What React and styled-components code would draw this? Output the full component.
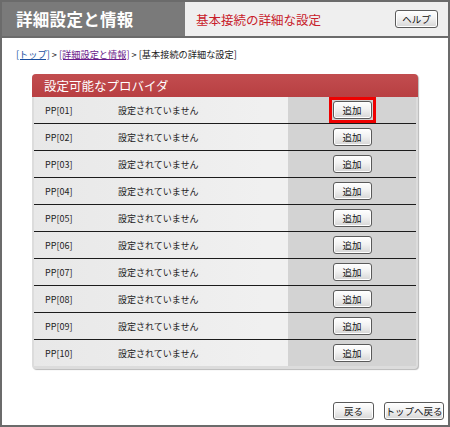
import React from 'react';
import styled, { createGlobalStyle } from 'styled-components';

const GlobalStyle = createGlobalStyle`
  html, body {
    margin: 0;
    padding: 0;
    background: #fff;
  }
  body {
    font-family: "Noto Sans CJK JP", "Noto Sans", sans-serif;
  }
`;

const providers = Array.from({ length: 10 }, (_, i) => `PP[${String(i + 1).padStart(2, '0')}]`);

const App = () => (
  <>
    <GlobalStyle />
    <Frame>
      <Header>
        <Title>詳細設定と情報</Title>
        <SubHeader>
          <SubTitle>基本接続の詳細な設定</SubTitle>
          <Button width={43}>ヘルプ</Button>
        </SubHeader>
      </Header>

      <Breadcrumb>
        <Crumb href="#">[トップ]</Crumb>
        {' > '}
        <Crumb href="#" visited>[詳細設定と情報]</Crumb>
        {' > [基本接続の詳細な設定]'}
      </Breadcrumb>

      <Panel>
        <PanelTitle>設定可能なプロバイダ</PanelTitle>
        {providers.map((name, i) => (
          <Row key={name} last={i === providers.length - 1}>
            <Name>{name}</Name>
            <Status>設定されていません</Status>
            <Action>
              <Button width={39} focused={i === 0}>追加</Button>
            </Action>
          </Row>
        ))}
      </Panel>

      <Footer>
        <Button width={41}>戻る</Button>
        <Button width={60}>トップへ戻る</Button>
      </Footer>
    </Frame>
  </>
);

export default App;

const Frame = styled.div`
  box-sizing: border-box;
  width: 450px;
  height: 427px;
  border: 2px solid #6b6b6b;
  display: flex;
  flex-direction: column;
  background: #fff;
`;

const Header = styled.div`
  display: flex;
  height: 34px;
  border-bottom: 2px solid #6b6b6b;
`;

const Title = styled.div`
  width: 183px;
  background: #7a7a7a;
  color: #fff;
  font-size: 16.5px;
  font-weight: bold;
  display: flex;
  align-items: center;
  padding-left: 14px;
  box-sizing: border-box;
  letter-spacing: 0.3px;
`;

const SubHeader = styled.div`
  flex: 1;
  background: #efefef;
  display: flex;
  align-items: center;
  justify-content: space-between;
  padding: 0 10px 0 11px;
`;

const SubTitle = styled.span`
  color: #c8202a;
  font-size: 12.5px;
`;

const Button = styled.div`
  position: relative;
  box-sizing: border-box;
  width: ${({ width }) => width}px;
  height: 18px;
  border: 1px solid #5a5a5a;
  border-radius: 3px;
  background: linear-gradient(#ffffff, #f2f2f2 45%, #d6d6d6);
  box-shadow: inset 0 0 0 1px #fff;
  display: flex;
  align-items: center;
  justify-content: center;
  font-size: 9.5px;
  color: #111;
  white-space: nowrap;

  /* focus frame drawn over the row, square corners */
  &::after {
    content: '';
    display: ${({ focused }) => (focused ? 'block' : 'none')};
    position: absolute;
    inset: -5px;
    border: 3px solid #ee0000;
  }
`;

const Breadcrumb = styled.div`
  margin: 10px 0 0 14px;
  font-size: 9.2px;
  line-height: 12px;
  color: #222;
`;

const Crumb = styled.a`
  color: ${({ visited }) => (visited ? '#6a1b8a' : '#1a4fa0')};
  text-decoration: underline;
`;

const Panel = styled.div`
  margin: 14px 0 0 30px;
  width: 386px;
  background: #dcdcdc;
  border-radius: 4px;
  padding: 0 2px 3px;
  box-sizing: border-box;
  box-shadow: 1px 1px 1px #b8b8b8;
`;

const PanelTitle = styled.div`
  height: 23px;
  margin: 0 -2px;
  background: linear-gradient(#c24d4f, #b83f42);
  border-radius: 4px 4px 0 0;
  color: #fff;
  font-size: 12.5px;
  display: flex;
  align-items: center;
  padding-left: 12px;
`;

const Row = styled.div`
  display: grid;
  grid-template-columns: 84px 170px 1fr;
  height: 26px;
  border-bottom: ${({ last }) => (last ? 'none' : '1.5px solid #1c1c1c')};
  background: linear-gradient(90deg, #e8e8e8, #f0f0f0 60%);
  font-size: 9px;
  color: #222;
`;

const Name = styled.div`
  display: flex;
  align-items: center;
  padding-left: 11px;
`;

const Status = styled.div`
  display: flex;
  align-items: center;
`;

const Action = styled.div`
  background: #d3d3d3;
  display: flex;
  align-items: center;
  justify-content: center;
`;

const Footer = styled.div`
  margin-top: auto;
  margin-bottom: 5px;
  display: flex;
  justify-content: flex-end;
  gap: 10px;
  padding-right: 4px;
`;
